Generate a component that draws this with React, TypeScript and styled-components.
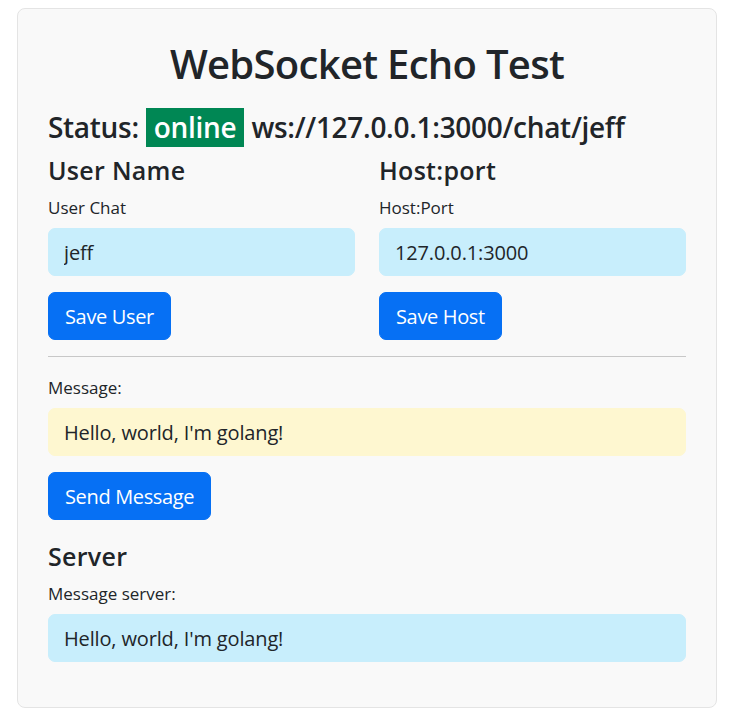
import React from "react";
import styled, { createGlobalStyle } from "styled-components";

const GlobalStyle = createGlobalStyle`
  body {
    margin: 0;
    background: #fff;
    color: #212529;
    font-family: "Open Sans", Lato, sans-serif;
  }
`;

const Page = styled.div`
  padding: 8px 23px 0 17px;
`;

const Card = styled.div`
  background: #f9f9f9;
  border: 1px solid #e4e4e4;
  border-radius: 8px;
  padding: 31px 30px 45px;
`;

const Title = styled.h1`
  margin: 0 0 20px;
  font-size: 40px;
  font-weight: 600;
  line-height: 48px;
  letter-spacing: -0.7px;
  text-align: center;
`;

const Status = styled.h3`
  display: flex;
  align-items: center;
  gap: 7px;
  margin: 0 0 9px;
  font-size: 28px;
  font-weight: 600;
  line-height: 39px;
  letter-spacing: -0.3px;
`;

const Badge = styled.span<{ $tone: string }>`
  background: ${(p) => p.$tone};
  color: #fff;
  padding: 0 8px;
  line-height: 39px;
`;

const Columns = styled.div`
  display: grid;
  grid-template-columns: 1fr 1fr;
  column-gap: 24px;
`;

const Column = styled.div`
  display: flex;
  flex-direction: column;
  align-items: flex-start;
`;

const Heading = styled.h4<{ $top?: number }>`
  margin: ${(p) => p.$top ?? 0}px 0 11px;
  font-size: 25px;
  font-weight: 600;
  line-height: 29px;
  letter-spacing: 0.3px;
`;

const Label = styled.label`
  display: block;
  margin-bottom: 8px;
  font-size: 17px;
  line-height: 24px;
`;

const Field = styled.input<{ $bg: string }>`
  box-sizing: border-box;
  display: block;
  width: 100%;
  height: 48px;
  padding: 8px 15px;
  border: 1px solid ${(p) => p.$bg};
  border-radius: 7px;
  background: ${(p) => p.$bg};
  color: #212529;
  font: inherit;
  font-size: 20px;
  letter-spacing: -0.15px;
  outline: none;
`;

const Button = styled.button`
  box-sizing: border-box;
  height: 48px;
  margin-top: 16px;
  padding: 0 16px;
  border: 1px solid #0670f4;
  border-radius: 7px;
  background: #0670f4;
  color: #fff;
  font: inherit;
  font-size: 20px;
  letter-spacing: -0.35px;
  cursor: pointer;
`;

const Rule = styled.hr`
  margin: 16px 0 19px;
  border: 0;
  border-top: 1px solid #c8c8c8;
`;

const Section = styled.div`
  display: flex;
  flex-direction: column;
  align-items: flex-start;
`;

const App = () => {
  return (
    <Page>
      <GlobalStyle />
      <Card>
        <Title>WebSocket Echo Test</Title>
        <Status>
          Status: <Badge $tone="#008754">online</Badge> ws://127.0.0.1:3000/chat/jeff
        </Status>
        <Columns>
          <Column>
            <Heading>User Name</Heading>
            <Label>User Chat</Label>
            <Field $bg="#c8eefc" defaultValue="jeff" />
            <Button>Save User</Button>
          </Column>
          <Column>
            <Heading>Host:port</Heading>
            <Label>Host:Port</Label>
            <Field $bg="#c8eefc" defaultValue="127.0.0.1:3000" />
            <Button>Save Host</Button>
          </Column>
        </Columns>
        <Rule />
        <Section>
          <Label>Message:</Label>
          <Field $bg="#fef7d0" defaultValue="Hello, world, I'm golang!" />
          <Button>Send Message</Button>
          <Heading $top={22}>Server</Heading>
          <Label>Message server:</Label>
          <Field $bg="#c8eefc" defaultValue="Hello, world, I'm golang!" />
        </Section>
      </Card>
    </Page>
  );
};

export default App;
